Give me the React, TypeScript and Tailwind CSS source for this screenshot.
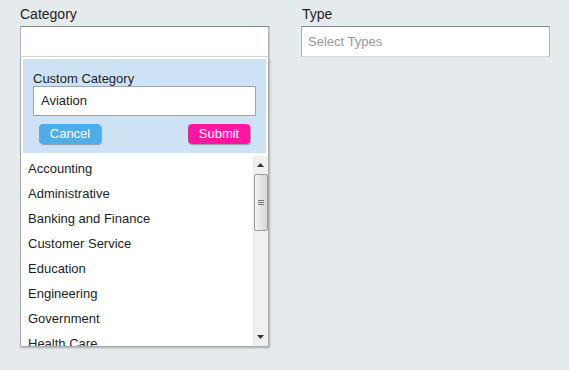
import React from "react";

const items = [
  "Accounting",
  "Administrative",
  "Banking and Finance",
  "Customer Service",
  "Education",
  "Engineering",
  "Government",
  "Health Care",
];

export default function App() {
  return (
    <div
      className="w-[569px] h-[370px] bg-[#e5eaed] text-[#1e1e1e] overflow-hidden"
      style={{ fontFamily: '"Liberation Sans", Arial, sans-serif' }}
    >
      <div className="flex gap-[32px] pl-[20px] pt-[6px]">
        {/* Category column */}
        <div className="w-[249px] flex flex-col">
          <div className="text-[14px] leading-4 mb-[4px]">Category</div>
          <div className="h-[31px] bg-white border border-[#b5b5b5] border-t-[#8a8a8a] border-b-[#d6d6d6] shadow-[1px_0_0_#c8c8c8]" />
          <div className="h-[290px] bg-white border border-t-0 border-[#a9a9a9] shadow-[1px_1px_2px_rgba(0,0,0,0.25)] flex flex-col overflow-hidden">
            <div className="mx-[2px] mt-[2px] bg-[#cde3f5] pt-[12px] pb-[9px] px-[10px]">
              <div className="text-[13px] leading-[15px]">Custom Category</div>
              <div className="h-[30px] bg-white border border-[#a4a4a4] flex items-center px-[7px] text-[13px]">
                Aviation
              </div>
              <div className="flex justify-between px-[6px] mt-[8px]">
                <button className="w-[62px] h-[20px] rounded-[4px] bg-[#4eaeea] text-white text-[13px] leading-[20px] shadow-[1px_1px_1px_rgba(0,0,0,0.3)]">
                  Cancel
                </button>
                <button className="w-[62px] h-[20px] rounded-[4px] bg-[#ff17a2] text-white text-[13px] leading-[20px] shadow-[1px_1px_1px_rgba(0,0,0,0.3)]">
                  Submit
                </button>
              </div>
            </div>
            <div className="flex flex-1 mt-[3px] overflow-hidden">
              <div className="flex-1 overflow-hidden">
                {items.map((it) => (
                  <div key={it} className="h-[25px] leading-[25px] pl-[7px] text-[13px] whitespace-nowrap">
                    {it}
                  </div>
                ))}
              </div>
              <div className="w-[16px] bg-[#f0f0f0] border-l border-[#f7f7f7] flex flex-col items-center">
                <div className="h-[18px] flex items-center justify-center">
                  <svg width="7" height="4" viewBox="0 0 7 4">
                    <path d="M3.5 0 L7 4 L0 4 Z" fill="#333" />
                  </svg>
                </div>
                <div className="w-[14px] h-[57px] rounded-[2px] border border-[#9a9a9a] bg-gradient-to-r from-[#f4f4f4] to-[#d6d6d6] flex flex-col items-center justify-center gap-[1px]">
                  <div className="w-[6px] h-px bg-[#777]" />
                  <div className="w-[6px] h-px bg-[#777]" />
                  <div className="w-[6px] h-px bg-[#777]" />
                </div>
                <div className="flex-1" />
                <div className="h-[18px] flex items-center justify-center">
                  <svg width="7" height="4" viewBox="0 0 7 4">
                    <path d="M0 0 L7 0 L3.5 4 Z" fill="#333" />
                  </svg>
                </div>
              </div>
            </div>
          </div>
        </div>
        {/* Type column */}
        <div className="w-[249px] flex flex-col">
          <div className="text-[14px] leading-4 mb-[4px] pl-[1px]">Type</div>
          <div className="h-[31px] bg-white border border-[#b5b5b5] border-t-[#8a8a8a] border-b-[#d6d6d6] flex items-center px-[6px] text-[13px] text-[#999]">
            Select Types
          </div>
        </div>
      </div>
    </div>
  );
}
